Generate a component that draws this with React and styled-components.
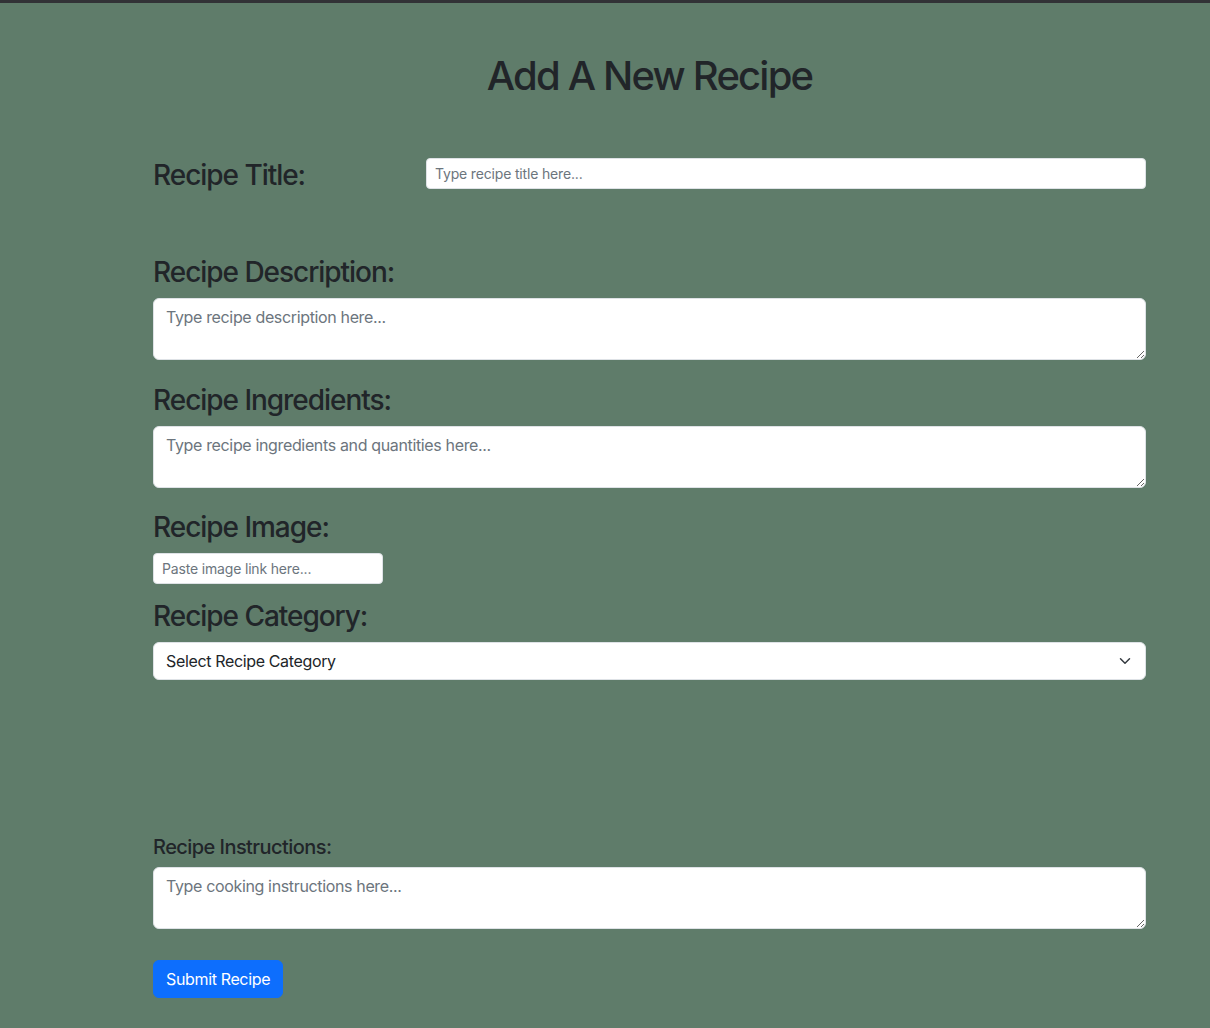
import React from "react";
import styled, { createGlobalStyle } from "styled-components";

const Global = createGlobalStyle`
  html, body {
    margin: 0;
    padding: 0;
    background: #5f7c6a;
  }
  body {
    font-family: Inter, "Noto Sans", "Liberation Sans", sans-serif;
    color: #212529;
    -webkit-font-smoothing: antialiased;
  }
  *, *::before, *::after { box-sizing: border-box; }
`;

const Page = styled.div`
  min-height: 1028px;
  background: #5f7c6a;
  border-top: 3px solid #323236;
`;

const Form = styled.form`
  width: 993px;
  margin-left: 153px;
  display: flex;
  flex-direction: column;
`;

const Heading = styled.h1`
  margin: 49px 0 58px;
  font-size: 40px;
  line-height: 1.2;
  font-weight: 500;
  letter-spacing: -0.045em;
  text-align: center;
`;

const Row = styled.div`
  display: grid;
  grid-template-columns: 273px 1fr;
  align-items: start;
  margin-bottom: ${(p) => p.$mb || 0}px;
`;

const Label = styled.label`
  display: block;
  font-size: 28px;
  line-height: 1.2;
  font-weight: 500;
  letter-spacing: -0.037em;
  padding-top: ${(p) => (p.$inline ? 1 : 2)}px;
  margin: 0 0 ${(p) => (p.$inline ? 0 : 8)}px;
`;

const SmallLabel = styled.label`
  display: block;
  font-size: 20px;
  line-height: 1.2;
  font-weight: 500;
  letter-spacing: -0.028em;
  padding-top: 1px;
  margin: 0 0 8px;
`;

const Group = styled.div`
  margin-bottom: ${(p) => p.$mb || 0}px;
`;

const Input = styled.input`
  display: block;
  width: ${(p) => (p.$w ? `${p.$w}px` : "100%")};
  height: 31px;
  padding: 4px 8px;
  font-family: inherit;
  font-size: 14px;
  line-height: 1.5;
  letter-spacing: -0.012em;
  color: #212529;
  background: #fff;
  border: 1px solid #dee2e6;
  border-radius: 4px;
  outline: none;
  &::placeholder { color: #6c757d; opacity: 1; }
`;

const TextArea = styled.textarea`
  display: block;
  width: 100%;
  height: 62px;
  padding: 6px 12px;
  font-family: inherit;
  font-size: 16px;
  line-height: 1.5;
  letter-spacing: -0.022em;
  color: #212529;
  background: #fff;
  border: 1px solid #dee2e6;
  border-radius: 6px;
  outline: none;
  resize: vertical;
  &::placeholder { color: #6c757d; opacity: 1; }
`;

const SelectWrap = styled.div`
  position: relative;
`;

const Select = styled.select`
  display: block;
  width: 100%;
  height: 38px;
  padding: 6px 36px 6px 12px;
  font-family: inherit;
  font-size: 16px;
  line-height: 1.5;
  letter-spacing: -0.022em;
  color: #212529;
  background: #fff;
  border: 1px solid #dee2e6;
  border-radius: 6px;
  appearance: none;
  -webkit-appearance: none;
  outline: none;
`;

const Chevron = styled.svg`
  position: absolute;
  right: 13px;
  top: 13px;
  width: 16px;
  height: 12px;
  pointer-events: none;
`;

const Button = styled.button`
  align-self: flex-start;
  height: 38px;
  padding: 6px 12px;
  font-family: inherit;
  font-size: 16px;
  line-height: 1.5;
  letter-spacing: -0.022em;
  color: #fff;
  background: #0d6efd;
  border: 1px solid #0d6efd;
  border-radius: 6px;
  cursor: pointer;
`;

export default function App() {
  return (
    <>
      <Global />
      <Page>
        <Form onSubmit={(e) => e.preventDefault()}>
          <Heading>Add A New Recipe</Heading>

          <Row $mb={61.8}>
            <Label $inline htmlFor="title">Recipe Title:</Label>
            <Input id="title" placeholder="Type recipe title here..." />
          </Row>

          <Group $mb={22.4}>
            <Label htmlFor="desc">Recipe Description:</Label>
            <TextArea id="desc" rows={2} placeholder="Type recipe description here..." />
          </Group>

          <Group $mb={21.4}>
            <Label htmlFor="ing">Recipe Ingredients:</Label>
            <TextArea id="ing" rows={2} placeholder="Type recipe ingredients and quantities here..." />
          </Group>

          <Group $mb={14.4}>
            <Label htmlFor="img">Recipe Image:</Label>
            <Input id="img" $w={230} placeholder="Paste image link here..." />
          </Group>

          <Group $mb={154}>
            <Label htmlFor="cat">Recipe Category:</Label>
            <SelectWrap>
              <Select id="cat" defaultValue="">
                <option value="">Select Recipe Category</option>
                <option value="breakfast">Breakfast</option>
                <option value="lunch">Lunch</option>
                <option value="dinner">Dinner</option>
                <option value="dessert">Dessert</option>
              </Select>
              <Chevron viewBox="0 0 16 16" aria-hidden="true">
                <path
                  d="m2 5 6 6 6-6"
                  fill="none"
                  stroke="#343a40"
                  strokeWidth="2"
                  strokeLinecap="round"
                  strokeLinejoin="round"
                />
              </Chevron>
            </SelectWrap>
          </Group>

          <Group $mb={31}>
            <SmallLabel htmlFor="instr">Recipe Instructions:</SmallLabel>
            <TextArea id="instr" rows={2} placeholder="Type cooking instructions here..." />
          </Group>

          <Button type="submit">Submit Recipe</Button>
        </Form>
      </Page>
    </>
  );
}
